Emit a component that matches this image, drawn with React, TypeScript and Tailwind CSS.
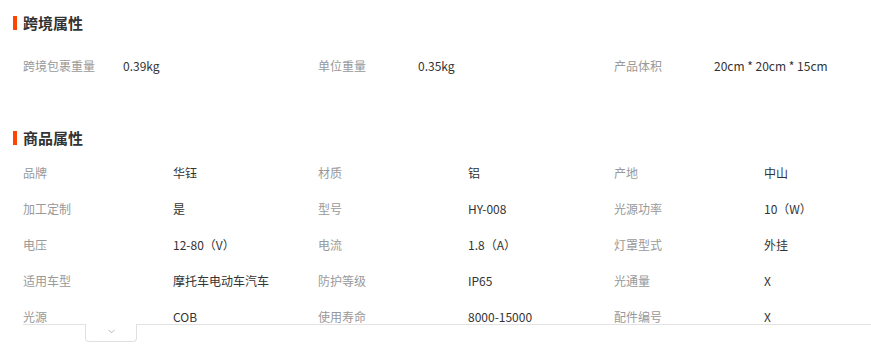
import { ChevronDown } from "lucide-react";

const crossBorder = [
    ["跨境包裹重量", "0.39kg"],
    ["单位重量", "0.35kg"],
    ["产品体积", "20cm * 20cm * 15cm"],
];

const attrs = [
    ["品牌", "华钰"],
    ["材质", "铝"],
    ["产地", "中山"],
    ["加工定制", "是"],
    ["型号", "HY-008"],
    ["光源功率", "10（W）"],
    ["电压", "12-80（V）"],
    ["电流", "1.8（A）"],
    ["灯罩型式", "外挂"],
    ["适用车型", "摩托车电动车汽车"],
    ["防护等级", "IP65"],
    ["光通量", "X"],
    ["光源", "COB"],
    ["使用寿命", "8000-15000"],
    ["配件编号", "X"],
];

function Title({ text }: { text: string }) {
    return (
        <div className="flex items-center h-[30px] pl-[13px]">
            <span className="w-[4px] h-[14px] bg-[#ff4400] mr-[6px]" />
            <h3 className="text-[15px] font-bold text-[#333]">{text}</h3>
        </div>
    );
}

export default function App() {
    return (
        <div
            className="w-[871px] h-[361px] bg-white overflow-hidden text-[12px]"
            style={{ fontFamily: '"Noto Sans CJK SC", "Noto Sans", sans-serif' }}
        >
            {/* 跨境属性 */}
            <div className="mt-2">
                <Title text="跨境属性" />
                <div className="mt-[10px] pl-[23px] grid grid-cols-[295px_296px_1fr]">
                    {crossBorder.map(([label, value]) => (
                        <div key={label} className="flex items-center h-9">
                            <span className="w-[100px] text-[#999]">{label}</span>
                            <span className="text-[#333]">{value}</span>
                        </div>
                    ))}
                </div>
            </div>

            {/* 商品属性 */}
            <div className="mt-[39px]">
                <Title text="商品属性" />
                <div className="mt-[2px] h-[169px] overflow-hidden pl-[23px] grid grid-cols-[295px_296px_1fr] content-start">
                    {attrs.map(([label, value]) => (
                        <div key={label} className="flex items-center h-9">
                            <span className="w-[150px] text-[#999]">{label}</span>
                            <span className="text-[#333]">{value}</span>
                        </div>
                    ))}
                </div>
                <div className="ml-[23px] border-t border-[#e3e3e3] relative">
                    <button
                        type="button"
                        className="absolute left-[62px] top-[-1px] w-[52px] h-[18px] bg-white border border-t-0 border-[#e0e0e0] rounded-b-[4px] flex items-start justify-center pt-[2px]"
                    >
                        <ChevronDown size={11} strokeWidth={1.5} className="text-[#999]" />
                    </button>
                </div>
            </div>
        </div>
    );
}
